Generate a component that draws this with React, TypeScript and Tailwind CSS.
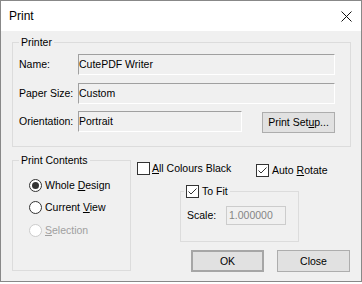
import type { ReactNode } from 'react';

function Field({ width, children }: { width: string; children: ReactNode }) {
    return (
        <div className={`${width} h-[21px] flex items-center border border-t-[#a0a0a0] border-l-[#a0a0a0] border-r-white border-b-white text-black`}>
            {children}
        </div>
    );
}

function Button({ children, primary }: { children: ReactNode; primary?: boolean }) {
    return (
        <button
            type="button"
            className={`w-[73px] flex items-center justify-center bg-[#e1e1e1] text-black ${primary ? 'h-[22px] border-2 border-[#a6a6a6]' : 'h-[22px] border border-[#adadad]'}`}
        >
            {children}
        </button>
    );
}

function CheckBox({ checked }: { checked?: boolean }) {
    return (
        <span className="w-[13px] h-[13px] shrink-0 border border-[#333] bg-white flex items-center justify-center">
            {checked && (
                <svg width="11" height="11" viewBox="0 0 11 11">
                    <path d="M1.5 5.5 L4 8 L9.5 2.5" fill="none" stroke="#333" strokeWidth="1" />
                </svg>
            )}
        </span>
    );
}

function Radio({ checked, disabled, children }: { checked?: boolean; disabled?: boolean; children: ReactNode }) {
    return (
        <div className={`flex items-center gap-[3px] h-[13px] ${disabled ? 'text-[#a0a0a0]' : 'text-black'}`}>
            <span className={`w-[13px] h-[13px] rounded-full border bg-white flex items-center justify-center ${disabled ? 'border-[#cccccc]' : 'border-[#333]'}`}>
                {checked && <span className="w-[7px] h-[7px] rounded-full bg-[#333]" />}
            </span>
            <span>{children}</span>
        </div>
    );
}

export default function App() {
    return (
        <div className="w-[362px] h-[284px] bg-white font-['Liberation_Sans',Arial,sans-serif]">
            <div className="h-[282px] border border-[#888] flex flex-col">
                {/* Title bar */}
                <div className="h-[30px] shrink-0 bg-white flex items-center justify-between pl-[8px] pr-[9px]">
                    <span className="text-[12px] text-black">Print</span>
                    <svg width="11" height="11" viewBox="0 0 11 11">
                        <path d="M0.5 0.5 L10.5 10.5 M10.5 0.5 L0.5 10.5" stroke="#111" strokeWidth="1" />
                    </svg>
                </div>

                {/* Body */}
                <div className="flex-1 bg-[#f0f0f0] pl-[11px] pt-[11px] text-[10.5px] leading-[13px] text-black">
                    {/* Printer group */}
                    <div className="relative w-[339px] h-[105px] border border-[#dcdcdc] pt-[11px] pl-[6px]">
                        <span className="absolute left-[6px] top-[-7px] px-[2px] bg-[#f0f0f0]">Printer</span>
                        <div className="flex items-center">
                            <span className="w-[59px]">Name:</span>
                            <Field width="w-[257px]">CutePDF Writer</Field>
                        </div>
                        <div className="flex items-center mt-[8px]">
                            <span className="w-[59px]">Paper Size:</span>
                            <Field width="w-[257px]">Custom</Field>
                        </div>
                        <div className="flex items-start mt-[7px]">
                            <span className="w-[59px] h-[21px] flex items-center">Orientation:</span>
                            <Field width="w-[164px]">Portrait</Field>
                            <div className="ml-[20px] mt-[1px]">
                                <button type="button" className="w-[73px] h-[21px] flex items-center justify-center bg-[#e1e1e1] border border-[#adadad]">
                                    <span>Print Set<u className="underline-offset-1">u</u>p...</span>
                                </button>
                            </div>
                        </div>
                    </div>

                    {/* Lower area */}
                    <div className="flex items-start mt-[13px]">
                        <div className="relative w-[119px] h-[111px] border border-[#dcdcdc] pt-[18px] pl-[16px]">
                            <span className="absolute left-[6px] top-[-7px] px-[2px] bg-[#f0f0f0]">Print Contents</span>
                            <Radio checked>Whole <u>D</u>esign</Radio>
                            <div className="mt-[9px]">
                                <Radio>Current <u>V</u>iew</Radio>
                            </div>
                            <div className="mt-[10px]">
                                <Radio disabled><u>S</u>election</Radio>
                            </div>
                        </div>

                        <div className="ml-[6px] flex flex-col">
                            <div className="flex items-start mt-[2px]">
                                <div className="w-[119px] flex items-center gap-[2px]">
                                    <CheckBox />
                                    <span><u>A</u>ll Colours Black</span>
                                </div>
                                <div className="mt-[2px] flex items-center gap-[3px]">
                                    <CheckBox checked />
                                    <span>Auto <u>R</u>otate</span>
                                </div>
                            </div>

                            <div className="relative ml-[43px] mt-[14px] w-[119px] h-[51px] border border-[#dcdcdc] pt-[14px] pl-[6px]">
                                <span className="absolute left-[3px] top-[-7px] px-[2px] bg-[#f0f0f0] flex items-center gap-[3px]">
                                    <CheckBox checked />
                                    <span>To Fit</span>
                                </span>
                                <div className="flex items-center">
                                    <span className="w-[39px]">Scale:</span>
                                    <div className="w-[60px] h-[19px] border border-[#cccccc] flex items-center pl-[2px] text-[#858585]">
                                        1.000000
                                    </div>
                                </div>
                            </div>

                            <div className="flex ml-[54px] mt-[8px] gap-[13px]">
                                <Button primary>OK</Button>
                                <Button>Close</Button>
                            </div>
                        </div>
                    </div>
                </div>
            </div>
        </div>
    );
}
